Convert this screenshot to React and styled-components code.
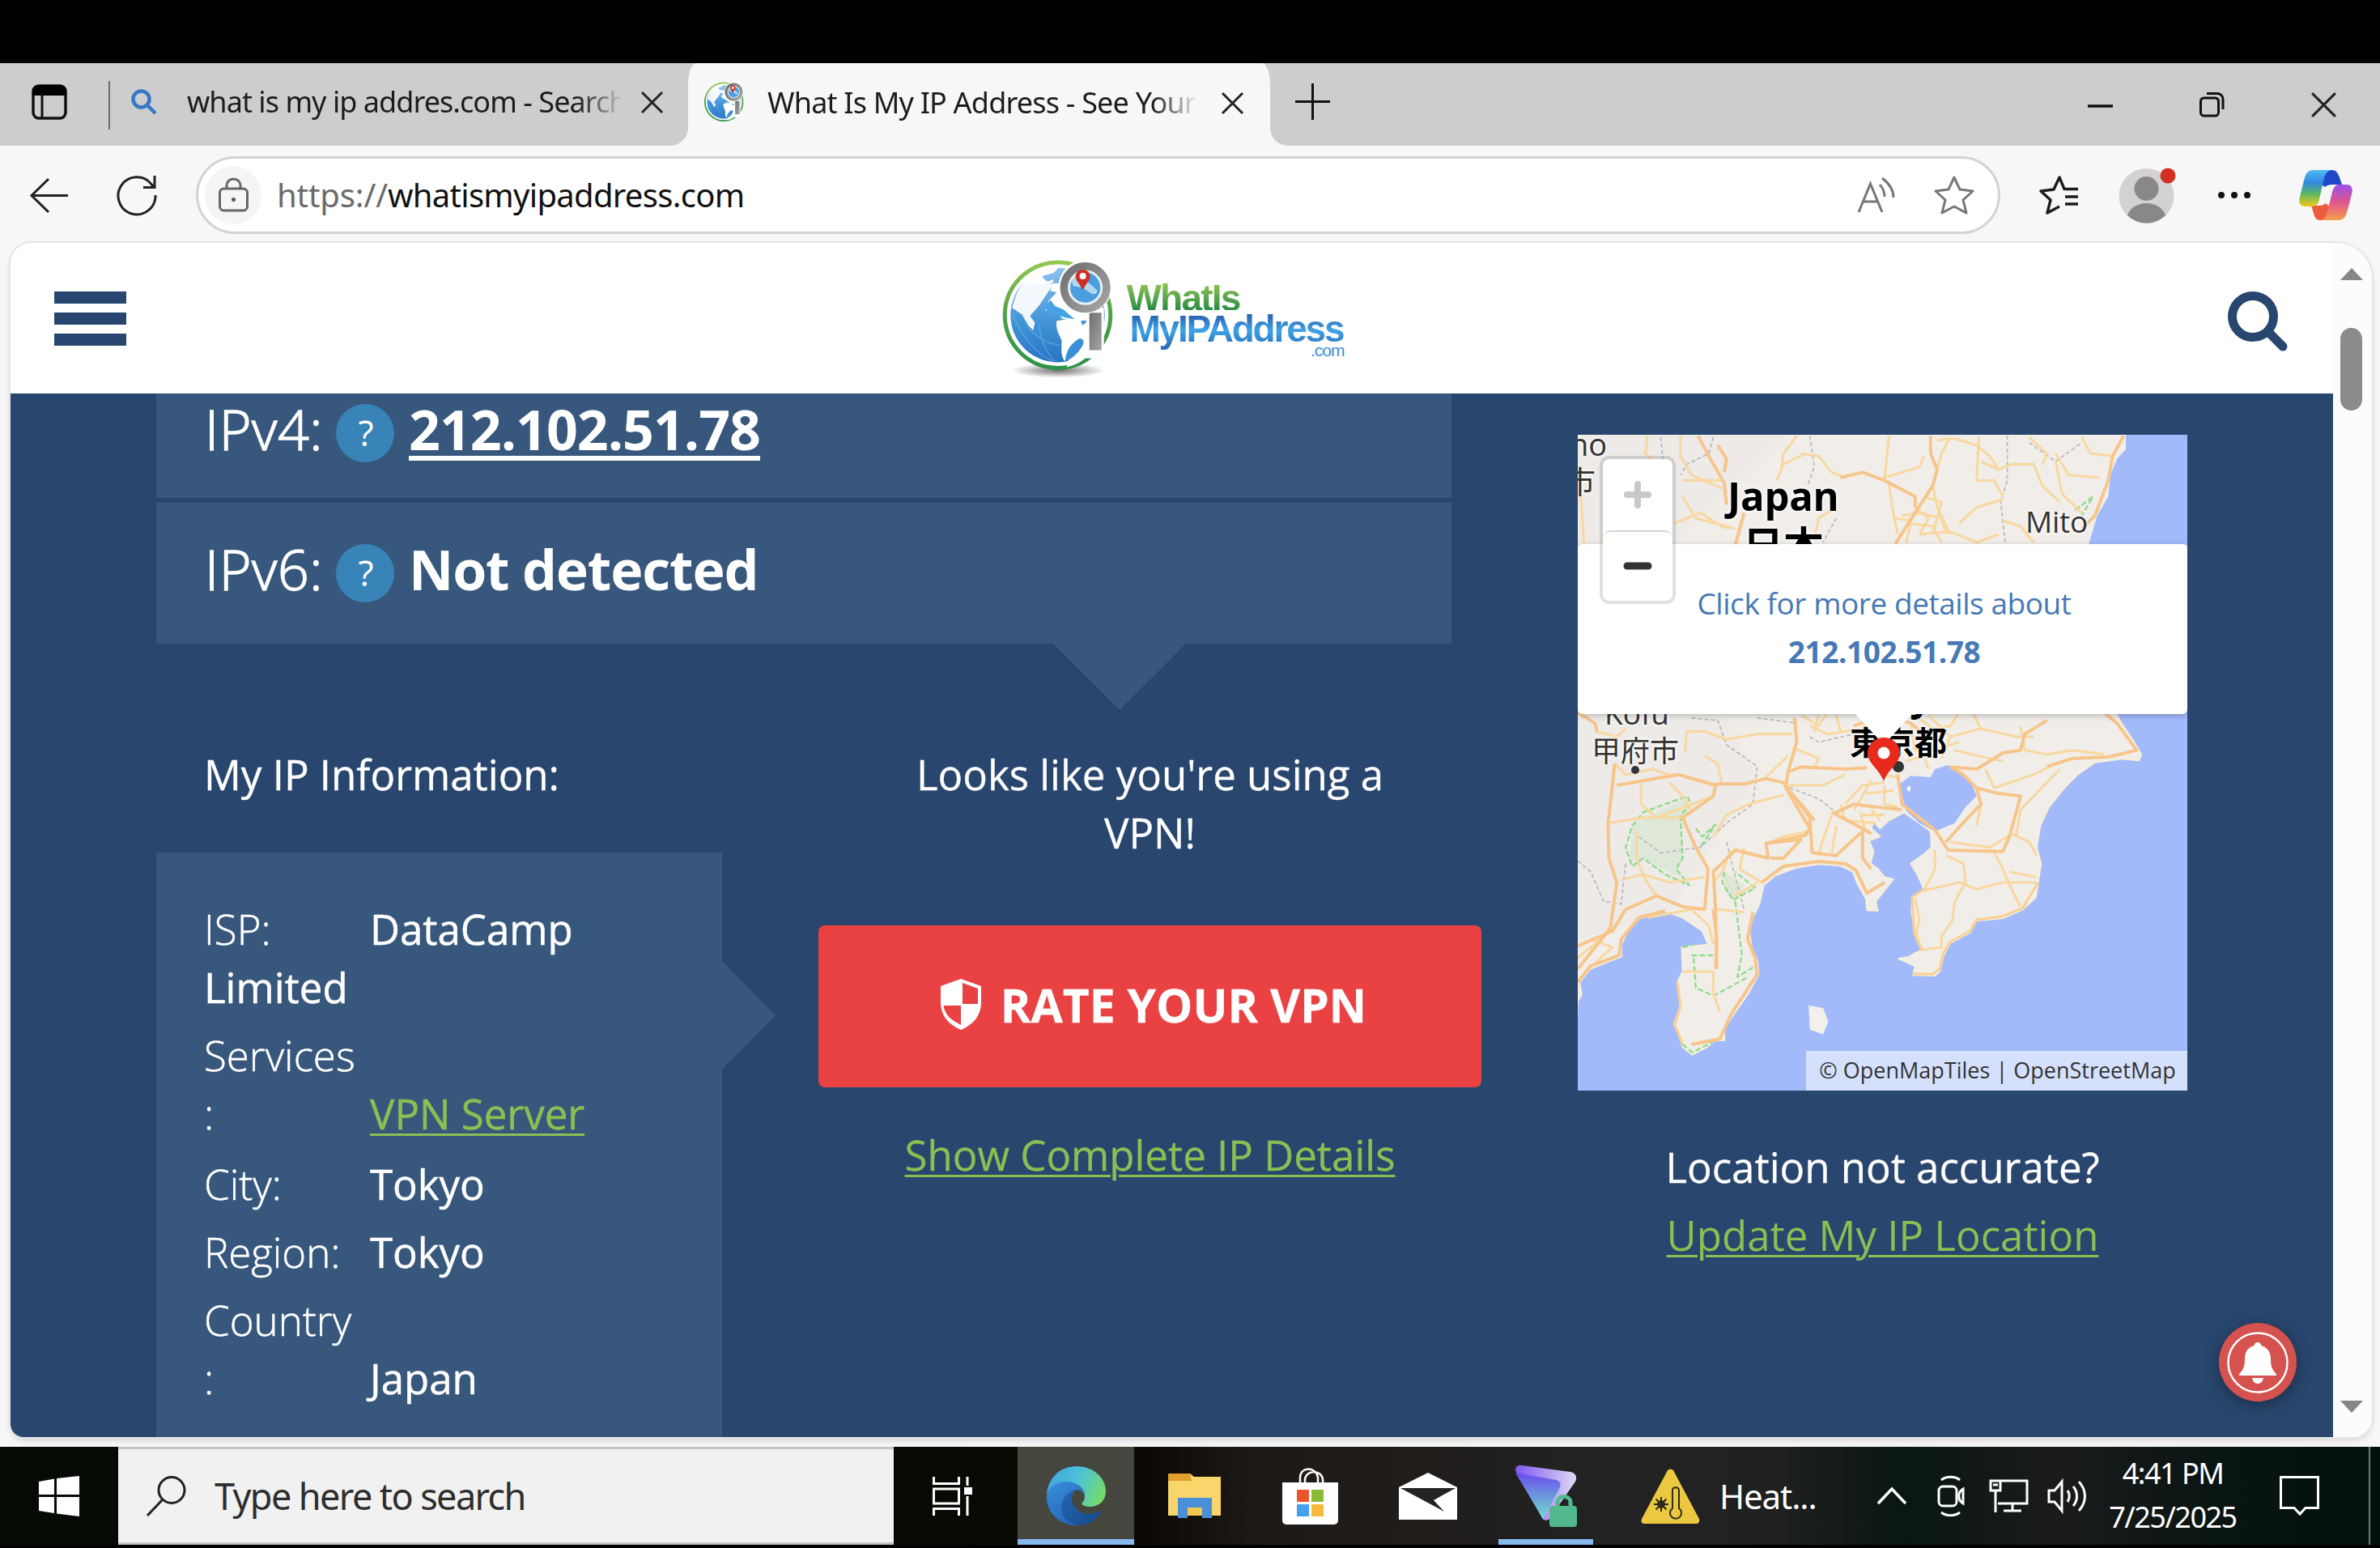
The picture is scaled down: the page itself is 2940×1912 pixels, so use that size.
import React from "react";
import styled, { createGlobalStyle } from "styled-components";

const UI = `"Noto Sans", "Open Sans", sans-serif`;
const WEB = `"Open Sans", "Noto Sans", "Noto Sans CJK JP", sans-serif`;
const NAVY = "#29466e";
const PANEL = "#37577c";
const GREEN = "#87c053";

const GlobalStyle = createGlobalStyle`
  * { box-sizing: border-box; }
  html, body { margin: 0; background: #000; }
  svg { display: block; flex: none; overflow: visible; }
`;

const Screen = styled.div`
  width: 2940px;
  height: 1912px;
  overflow: hidden;
  background: #000;
  display: flex;
  flex-direction: column;
  padding: 78px 0 4px;
  font-family: ${UI};
`;

/* ---------- tab strip ---------- */
const TabStrip = styled.div`
  height: 102px;
  flex: none;
  display: flex;
  background: #f7f7f7;
`;
const StripLeft = styled.div`
  width: 850px;
  background: #cdcdcd;
  border-bottom-right-radius: 22px;
  display: flex;
  align-items: center;
  padding: 0 31px 6px 39px;
`;
const StripRight = styled.div`
  flex: 1;
  background: #cdcdcd;
  border-bottom-left-radius: 22px;
  display: flex;
  align-items: center;
  justify-content: space-between;
  padding: 0 54px 8px 31px;
`;
const ActiveSlot = styled.div`
  width: 719px;
  background: linear-gradient(#cdcdcd 40px, #f7f7f7 40px);
`;
const ActiveTab = styled.div`
  height: 100%;
  background: #f7f7f7;
  border-radius: 10px 10px 0 0 / 26px 26px 0 0;
  display: flex;
  align-items: center;
  padding: 0 33px 4px 20px;
`;
const StripDivider = styled.div`
  width: 2px;
  height: 60px;
  background: #6d6d6d;
  margin: 8px 26px 0 51px;
`;
const TabTitle = styled.div`
  width: ${(p) => p.$w}px;
  margin: 0 ${(p) => p.$after}px 0 ${(p) => p.$before}px;
  overflow: hidden;
  white-space: nowrap;
  font-size: 36px;
  line-height: 50px;
  letter-spacing: ${(p) => p.$ls}px;
  color: #1c1c1c;
  mask-image: linear-gradient(90deg, #000 90%, transparent 101%);
`;
const WindowButtons = styled.div`
  display: flex;
  align-items: center;
  gap: 107px;
  padding-top: 8px;
`;

/* ---------- toolbar ---------- */
const Toolbar = styled.div`
  height: 120px;
  flex: none;
  background: #f7f7f7;
  display: flex;
  align-items: center;
  padding: 2px 34px 0 37px;
`;
const NavIcons = styled.div`
  display: flex;
  align-items: center;
  gap: 60px;
  width: 205px;
`;
const AddressBar = styled.div`
  width: 2229px;
  height: 96px;
  border: 3px solid #d3d3d3;
  border-radius: 48px;
  background: #fff;
  display: flex;
  align-items: center;
  padding: 0 29px 0 8px;
`;
const LockBadge = styled.div`
  width: 70px;
  height: 72px;
  border-radius: 50%;
  background: #f5f5f5;
  display: flex;
  align-items: center;
  justify-content: center;
`;
const Url = styled.div`
  flex: 1;
  margin-left: 19px;
  font-size: 40px;
  line-height: 56px;
  letter-spacing: -0.7px;
  color: #111;
`;
const Scheme = styled.span`
  color: #6b6b6b;
  letter-spacing: -0.1px;
`;
const AddressIcons = styled.div`
  display: flex;
  align-items: center;
  gap: 47px;
`;
const ToolIcons = styled.div`
  display: grid;
  grid-template-columns: 98px 122px 101px 66px;
  align-items: center;
  padding-left: 48px;
`;

/* ---------- viewport ---------- */
const Viewport = styled.div`
  flex: none;
  height: 1487px;
  background: #f7f7f7;
  padding: 0 10px 12px 13px;
`;
const Frame = styled.div`
  height: 1475px;
  border-radius: 26px 44px 24px 16px;
  overflow: hidden;
  display: flex;
  background: #fcfcfc;
  box-shadow: 0 0 0 2px #e6e6e6, 0 4px 8px rgba(0, 0, 0, 0.14);
`;
const Site = styled.div`
  width: 2869px;
  height: 1475px;
  display: flex;
  flex-direction: column;
  font-family: ${WEB};
`;
const ScrollBar = styled.div`
  width: 48px;
  background: #fcfcfc;
  display: flex;
  flex-direction: column;
  align-items: center;
  padding: 31px 3px 30px 0;
`;
const Thumb = styled.div`
  width: 27px;
  height: 102px;
  border-radius: 14px;
  background: #8b8b8b;
  margin: 59px 0 auto;
`;
const SiteHeader = styled.header`
  height: 186px;
  flex: none;
  background: #fff;
  display: grid;
  grid-template-columns: 1fr 440px 1fr;
  padding: 0 56px 0 54px;
`;
const Burger = styled.div`
  width: 89px;
  padding-top: 60px;
  display: flex;
  flex-direction: column;
  gap: 11px;
`;
const BurgerBar = styled.div`
  height: 15px;
  background: #28466f;
`;
const HeaderSearch = styled.div`
  display: flex;
  justify-content: flex-end;
  padding-top: 60px;
`;
const Logo = styled.div`
  display: flex;
  padding-top: 20px;
  margin-left: 12px;
`;
const LogoText = styled.div`
  display: flex;
  flex-direction: column;
  width: 270px;
  margin-left: 16px;
  padding-top: 26px;
  font-family: "Liberation Sans", sans-serif;
  font-weight: 700;
`;
const LogoGreen = styled.div`
  font-size: 46px;
  line-height: 44px;
  height: 37px;
  letter-spacing: -1.8px;
  color: transparent;
  background: linear-gradient(#8cc152 15%, #2f8f46 95%);
  background-clip: text;
`;
const LogoBlue = styled.div`
  font-size: 46px;
  line-height: 46px;
  height: 50px;
  margin: 0 0 -9px 4px;
  letter-spacing: -2.2px;
  color: transparent;
  background: linear-gradient(#2c66b4 15%, #3fa4e6 50%, #2c6fbd 90%);
  background-clip: text;
`;
const LogoDotCom = styled.div`
  font-size: 21px;
  line-height: 18px;
  font-weight: 400;
  text-align: right;
  padding-right: 1px;
  letter-spacing: -1px;
  color: #3b8fd4;
`;

/* ---------- hero ---------- */
const Hero = styled.main`
  height: 1289px;
  flex: none;
  position: relative;
  background: ${NAVY};
  display: flex;
  gap: 119px;
  padding-left: 180px;
  color: #fff;
`;
const LeftColumn = styled.div`
  width: 1637px;
`;
const IpRows = styled.div`
  position: relative;
  width: 1600px;
  display: flex;
  flex-direction: column;
  gap: 6px;
  &::after {
    content: "";
    position: absolute;
    left: 1108px;
    top: 100%;
    border: solid transparent;
    border-width: 82px 82px 0;
    border-top-color: ${PANEL};
  }
`;
const IpRow = styled.div`
  height: ${(p) => p.$h}px;
  padding: ${(p) => p.$top}px 0 0 60px;
  background: ${PANEL};
  display: flex;
  align-items: flex-start;
`;
const IpLabel = styled.div`
  width: 162px;
  font-size: 68px;
  line-height: 72px;
  font-weight: 300;
  letter-spacing: 0.6px;
  -webkit-text-stroke: 1.4px #fff;
`;
const Help = styled.div`
  width: 72px;
  height: 72px;
  margin-top: 5px;
  border-radius: 50%;
  background: #3884b9;
  font-size: 44px;
  line-height: 70px;
  text-align: center;
  padding-left: 2px;
`;
const IpValue = styled.div`
  margin-left: 18px;
  font-size: 68px;
  line-height: 72px;
  font-weight: 700;
  letter-spacing: ${(p) => p.$ls}px;
  text-decoration: ${(p) => (p.$link ? "underline" : "none")};
  text-decoration-thickness: 6px;
  text-underline-offset: 7px;
`;
const Columns = styled.div`
  display: grid;
  grid-template-columns: 699px 819px;
  column-gap: 119px;
  padding-top: 125px;
`;
const Heading = styled.div`
  padding-left: 59px;
  font-size: 51px;
  line-height: 72px;
  margin-bottom: 61px;
  -webkit-text-stroke: 0.4px currentColor;
`;
const InfoPanel = styled.div`
  position: relative;
  height: 722px;
  background: ${PANEL};
  padding: 58px 60px 0 59px;
  font-size: 51px;
  line-height: 72px;
  &::after {
    content: "";
    position: absolute;
    left: 100%;
    top: 134px;
    border: solid transparent;
    border-width: 67px 0 67px 66px;
    border-left-color: ${PANEL};
  }
`;
const InfoRow = styled.div`
  margin-bottom: ${(p) => p.$gap || 12}px;
  -webkit-text-stroke: 0.5px currentColor;
`;
const InfoLabel = styled.span`
  display: inline-block;
  vertical-align: bottom;
  width: 205px;
  font-weight: 300;
`;
const Link = styled.a`
  color: ${GREEN};
  text-decoration: underline;
  text-decoration-thickness: 3px;
  text-underline-offset: 5px;
`;
const CenterColumn = styled.div`
  display: flex;
  flex-direction: column;
  align-items: center;
  font-size: 51px;
  line-height: 72px;
  text-align: center;
  -webkit-text-stroke: 0.3px currentColor;
`;
const VpnNote = styled.div`
  width: 640px;
`;
const RateButton = styled.div`
  width: 819px;
  height: 200px;
  margin: 79px 0 47px;
  border-radius: 8px;
  background: #ea4243;
  display: flex;
  align-items: center;
  justify-content: center;
  gap: 22px;
  padding: 0 0 5px 7px;
  font-size: 57px;
  font-weight: 700;
`;
const RightColumn = styled.div`
  width: 753px;
  padding-top: 51px;
  display: flex;
  flex-direction: column;
  font-size: 51px;
  line-height: 72px;
  text-align: center;
`;
const MapBox = styled.div`
  position: relative;
  height: 810px;
  overflow: hidden;
  margin-bottom: 58px;
  background: #f1eeea;
`;
const MapLabel = styled.div`
  position: absolute;
  left: ${(p) => p.$x}px;
  top: ${(p) => p.$y}px;
  font-size: ${(p) => p.$s}px;
  line-height: 1;
  font-weight: ${(p) => (p.$bold ? 700 : 400)};
  letter-spacing: ${(p) => p.$ls || 0}px;
  white-space: nowrap;
  color: ${(p) => (p.$bold ? "#000" : "#333")};
  text-shadow: 0 0 4px #fff, 0 0 4px #fff;
`;
const Popup = styled.div`
  position: absolute;
  left: 0;
  top: 135px;
  width: 753px;
  height: 210px;
  padding: 43px 0 0 4px;
  border-radius: 6px;
  background: #fff;
  box-shadow: 0 2px 7px rgba(0, 0, 0, 0.25);
  color: #4679b5;
  font-size: 37px;
  line-height: 60px;
  letter-spacing: -0.45px;
  &::after {
    content: "";
    position: absolute;
    left: 343px;
    top: 100%;
    border: solid transparent;
    border-width: 38px 35px 0;
    border-top-color: #fff;
  }
`;
const ZoomControl = styled.div`
  position: absolute;
  left: 27px;
  top: 26px;
  width: 94px;
  height: 183px;
  border: 4px solid rgba(0, 0, 0, 0.12);
  background-clip: padding-box;
  border-radius: 12px;
  background-color: #fff;
  display: grid;
  grid-template-rows: 1fr 1fr;
  place-items: center;
`;
const ZoomCell = styled.div`
  width: 100%;
  height: 100%;
  display: grid;
  place-items: center;
  border-top: ${(p) => (p.$line ? "2px solid #d4d4d4" : "0")};
  border-radius: 10px;
`;
const Pin = styled.div`
  position: absolute;
  left: 358px;
  top: 374px;
`;
const Attribution = styled.div`
  position: absolute;
  right: 0;
  bottom: 0;
  width: 471px;
  height: 49px;
  background: rgba(255, 255, 255, 0.55);
  color: #333;
  font-size: 27px;
  line-height: 48px;
  padding-left: 2px;
  white-space: nowrap;
`;
const MapNote = styled.div`
  margin-bottom: 12px;
  -webkit-text-stroke: 0.3px currentColor;
`;
const Bell = styled.div`
  position: absolute;
  right: 45px;
  bottom: 44px;
  width: 96px;
  height: 97px;
  border-radius: 50%;
  background: #d5524f;
  box-shadow: 0 4px 18px rgba(0, 0, 0, 0.35);
  display: grid;
  place-items: center;
`;

/* ---------- taskbar ---------- */
const Taskbar = styled.div`
  height: 121px;
  flex: none;
  display: flex;
  background: linear-gradient(90deg, #060a04 0, #070904 1120px, #0d0a06 1420px, #1f1a16 1560px, #201d1b 1750px, #232323 2000px, #1f2020 2200px, #081614 2350px, #1a1b1b 2540px, #081513 2750px, #03100e 100%);
  color: #fff;
`;
const StartButton = styled.div`
  width: 146px;
  display: grid;
  place-items: center;
`;
const SearchBox = styled.div`
  width: 958px;
  background: #f1f1f1;
  border: solid #c4c4c4;
  border-width: 3px 0;
  display: flex;
  align-items: center;
  gap: 35px;
  padding-left: 35px;
  font-size: 45px;
  letter-spacing: -1.6px;
  color: #2d2d2d;
`;
const TaskItem = styled.div`
  width: ${(p) => p.$w}px;
  height: 121px;
  margin-left: ${(p) => p.$ml || 0}px;
  padding-right: ${(p) => p.$pr || 0}px;
  display: grid;
  place-items: center;
  background: ${(p) => (p.$active ? "#45473f" : "transparent")};
  box-shadow: ${(p) => (p.$open ? "inset 0 -7px 0 #86b9ee" : "none")};
`;
const Weather = styled.div`
  display: flex;
  align-items: center;
  gap: 24px;
  margin-left: 59px;
  width: 292px;
  font-size: 42px;
  letter-spacing: -1.1px;
`;
const Tray = styled.div`
  display: grid;
  grid-template-columns: 74px 64px 72px 52px;
  align-items: center;
  width: 262px;
`;
const Clock = styled.div`
  width: 210px;
  margin: 0 3px 0 -2px;
  display: flex;
  flex-direction: column;
  justify-content: center;
  text-align: center;
  font-size: 36px;
  line-height: 54px;
  letter-spacing: -1.5px;
  padding-bottom: 1px;
`;
const Notice = styled.div`
  width: 136px;
  display: flex;
  align-items: center;
  padding-left: 24px;
  border-right: 2px solid #6c7674;
`;

/* ---------- icons ---------- */
const CloseX = ({ s = 27, w = 3 }) => (
  <svg width={s} height={s} viewBox="0 0 27 27" fill="none" stroke="#222" strokeWidth={w}>
    <path d="M1 1l25 25M26 1L1 26" />
  </svg>
);

const GlobeArt = ({ size, shadow }) => (
  <svg width={size} height={size * 1.07} viewBox="0 0 136 146">
    <defs>
      <linearGradient id="ring" x1="0" y1="0" x2="0" y2="1">
        <stop offset="0" stopColor="#94c84f" />
        <stop offset=".5" stopColor="#4fa14a" />
        <stop offset="1" stopColor="#2f9247" />
      </linearGradient>
      <linearGradient id="ocean" x1="0" y1="0" x2="0" y2="1">
        <stop offset="0" stopColor="#8cc0ec" />
        <stop offset=".6" stopColor="#3f92d6" />
        <stop offset="1" stopColor="#2a74c4" />
      </linearGradient>
      <linearGradient id="metal" x1="0" y1="0" x2="1" y2="1">
        <stop offset="0" stopColor="#6f6f6f" />
        <stop offset="1" stopColor="#a5a5a5" />
      </linearGradient>
      <radialGradient id="shade">
        <stop offset="0" stopColor="#000" stopOpacity=".55" />
        <stop offset="1" stopColor="#000" stopOpacity="0" />
      </radialGradient>
    </defs>
    {shadow && <ellipse cx="68" cy="137" rx="58" ry="9" fill="url(#shade)" />}
    <circle cx="67" cy="69" r="65" fill="#fff" stroke="url(#ring)" strokeWidth="5" />
    <circle cx="67" cy="69" r="58" fill="url(#ocean)" />
    <path d="M24 30C34 17 50 10 68 11l-6 6-14 4 4 8 10-4-4 14 8 2-10 10-4 12 6 4 8-4 6 10 14 4 20-2c-8 6-12 10-16 14-3 12-6 18-8 28l-4 16c20-4 42-22 46-48L118 30z" fill="#fff" />
    <path d="M66 76l26-4c8 8 6 14 2 22-8 8-14 16-18 32-6-8-4-18-4-26-4-8-8-16-6-24z" fill="#fff" />
    <path d="M24 30c-6 8-10 18-13 30l12 8 8 14 6 6 2-10-6-8 12-14 8-12 8-12-14-10z" fill="#fff" opacity=".92" />
    <path d="M52 58l6-8 6 8 10 4 14 12-12-2-12-4-10-2z" fill="#45a3e4" />
    <path d="M76 126c2-12 4-18 14-26 8-6 12 2 6 9-5 8-12 14-20 17z" fill="#3a8fd6" />
    <path d="M12 70c14 30 30 48 50 56M30 84c14 14 24 20 40 22M44 80c2 20 10 36 20 46" stroke="#7ebced" strokeWidth="1" fill="none" opacity=".7" />
    <rect x="102" y="60" width="22" height="62" fill="#fff" />
    <path d="M106 66h15v46h-15z" fill="url(#metal)" />
    <circle cx="101" cy="34" r="33" fill="#fff" />
    <circle cx="101" cy="35" r="26" fill="#4a9fe0" stroke="url(#metal)" strokeWidth="10" />
    <circle cx="101" cy="35" r="20" fill="none" stroke="#e8eef2" strokeWidth="3" />
    <path d="M84 26c5-8 12-11 20-9l-2 10 8 6 6 6c-2 6-6 4-10 2l-8-6-12-2z" fill="#d6ebfa" opacity=".75" />
    <path d="M98 38c-6-10-9-12-9-17a9 8 0 0118 0c0 5-4 8-9 17z" fill="#d0301f" />
    <circle cx="98" cy="21" r="4" fill="#fff" />
  </svg>
);

const EdgeLogo = () => (
  <svg width="73" height="73" viewBox="0 0 73 73">
    <defs>
      <linearGradient id="edgeTop" x1="0" y1=".3" x2="1" y2=".6">
        <stop offset="0" stopColor="#3fa5de" />
        <stop offset=".5" stopColor="#4cc3d8" />
        <stop offset="1" stopColor="#74dc68" />
      </linearGradient>
      <linearGradient id="edgeSide" x1="0" y1="0" x2=".6" y2="1">
        <stop offset="0" stopColor="#3a8fdc" />
        <stop offset="1" stopColor="#2465bb" />
      </linearGradient>
      <linearGradient id="edgeIn" x1="0" y1="0" x2="1" y2="1">
        <stop offset="0" stopColor="#2467b4" />
        <stop offset="1" stopColor="#174a8c" />
      </linearGradient>
    </defs>
    <path d="M0 36C1 15 16 0 37 0c20 0 36 14 36 31 0 11-8 19-20 19-7 0-11-3-9-5 2-2 3-5 3-8 0-9-9-17-21-17C12 20 2 27 0 36z" fill="url(#edgeTop)" />
    <path d="M0 37c2-12 12-18 24-18 14 0 23 8 23 18-2-6-7-8-11-8-9 4-14 14-12 25 2 9 9 17 17 19C18 75-1 58 0 37z" fill="url(#edgeSide)" />
    <path d="M37 29c-11 2-19 11-19 22 0 12 10 22 23 22 12-1 21-8 26-16 1-2-1-2-2-1-4 2-9 3-13 3-11 0-21-8-21-19 0-5 2-9 6-11z" fill="url(#edgeIn)" />
  </svg>
);

const CopilotLogo = () => (
  <svg width="66" height="62" viewBox="0 0 66 62">
    <defs>
      <linearGradient id="cpA" x1="0" y1="0" x2="0" y2="1">
        <stop offset="0" stopColor="#4cbcf2" />
        <stop offset=".35" stopColor="#3488e2" />
        <stop offset=".65" stopColor="#5cb860" />
        <stop offset="1" stopColor="#f2c81e" />
      </linearGradient>
      <linearGradient id="cpB" x1="0" y1="0" x2="0" y2="1">
        <stop offset="0" stopColor="#9a50e8" />
        <stop offset=".5" stopColor="#e0568c" />
        <stop offset="1" stopColor="#f6a04a" />
      </linearGradient>
    </defs>
    <path d="M32 0h9c5 0 7 4 9 9l3 9H42c-5 0-8 1-10 3l-4-3z" fill="#1f48c8" />
    <path d="M36 62H26c-5 0-7-4-8-9l-3-9h10c4 0 6-1 7-3l5 3z" fill="#ee5a3c" />
    <path d="M18 0h22c-5 1-7 4-9 10l-6 26c-1 6-4 9-9 9H7C1 45-1 40 1 33l6-24C9 3 12 0 18 0z" fill="url(#cpA)" />
    <path d="M48 62H26c5-1 7-4 9-10l6-25c2-6 4-9 9-9h9c6 0 8 5 6 12l-6 23c-2 6-5 9-11 9z" fill="url(#cpB)" />
  </svg>
);

const STAR = "M25 2l7 15 16 2-12 11 4 16-15-8-15 8 4-16L2 19l16-2z";

/* Road and coast geometry shares one survey grid for both halves of the map. */
const GRID = "translate(-49.3 323) scale(.542 .3333)";
const SEA =
  "M1310 40L1330 100 1355 160 1375 215 1370 238 1330 232 1270 245 1230 290 1200 340 1165 410 1145 480 1137 560 1147 620 1140 690 1135 745 1105 790 1060 822 1000 832 985 875 940 915 925 960 915 1020 905 1035 855 1033 860 1000 840 985 822 972 845 966 862 950 875 940 862 890 852 800 853 745 880 715 865 660 850 620 880 585 897 560 895 500 835 430 800 460 780 490 765 465 760 490 780 520 755 535 765 575 758 620 775 640 790 670 810 678 790 720 770 760 775 795 750 793 748 750 730 700 718 650 690 628 640 622 590 635 540 665 515 700 505 770 490 820 482 870 487 930 500 980 503 1030 480 1100 450 1170 425 1230 425 1275 405 1275 385 1300 352 1328 330 1300 322 1250 310 1215 325 1150 318 1060 330 1020 328 930 388 920 375 870 330 820 285 795 230 825 205 870 190 920 190 965 120 1010 95 1060 100 1105 91 1130 80 1480 1500 1480 1500 40Z";
const BAY =
  "M820 330L850 295 895 300 905 270 935 255 965 290 990 330 1000 370 975 410 950 470 905 500 870 470 840 425 832 380Z";
const NORTH_SEA =
  "M1340 -980L1340 -915 1320 -880 1305 -820 1300 -740 1275 -670 1255 -560 1500 -560 1500 -980Z";
const MAJOR = [
  "M91 60L130 100 135 130M175 250L170 330 160 470 162 600 180 690 165 860 91 1010",
  "M91 925L170 870 200 790 270 740 330 780 380 790 388 640 360 560 330 450 400 370 405 330 320 290 250 310 180 330",
  "M405 325L470 325 520 305 560 320 620 450 625 580M570 345L600 400 630 460",
  "M570 280L600 262 700 270 750 265M585 80L590 170 570 280 565 340 620 490 610 515 520 545 525 600 450 570 400 650 405 790 408 1010",
  "M400 790L408 900 405 1010M520 545L600 530 560 600 530 600",
  "M670 430L740 490 760 510M680 430L720 400 770 410 830 420M820 290L830 400 905 495 935 570 1060 575 1075 520 1100 370 1050 360 1000 340 970 290 940 262",
  "M1000 340L1010 400 980 450 930 540M940 262L1000 270 1060 210 1100 200 1110 140 1160 90",
  "M720 110L790 70 850 100 880 140M625 580L680 590 740 500 740 600 760 640",
  "M510 690L560 630 640 612 700 620 725 645 750 730 790 690",
  "M490 800L478 900 495 970 500 1030 440 1180 415 1270 350 1290",
  "M91 1060L120 1000 185 960 190 900 230 820 290 795",
  "M365 -965L400 -860 425 -790 430 -710M410 -930L430 -880 425 -830",
  "M470 -680L450 -560M895 -965L895 -900 910 -840 900 -780 860 -680 815 -565",
  "M690 -810L740 -830 790 -800 860 -740 860 -700M1335 -965L1310 -890 1300 -800 1270 -670 1240 -620",
  "M1160 260L1220 230 1300 225 1365 200 1320 100 1290 60",
];
const MINOR = [
  "M250 -965L245 -900 270 -860M325 -965L325 -890 350 -820 420 -770M555 -850L560 -900 590 -965M600 -900L640 -890 670 -830 700 -810",
  "M545 -800L560 -860 610 -900M800 -965L795 -880 790 -810 870 -850 880 -890M910 -950L950 -955 1000 -930 1030 -890 1050 -840 1080 -860 1130 -860 1150 -780 1190 -720",
  "M920 -900L900 -780 910 -700 940 -600M1005 -960L1000 -800 1040 -800 1060 -740M1180 -900L1210 -820 1280 -810M1180 -870L1195 -750 1240 -680",
  "M800 -790L810 -680 820 -600M830 -670L870 -680 920 -660 930 -600M850 -640L900 -630 920 -570M880 -740L920 -720 900 -600M870 -600L940 -610 1000 -570 1050 -600",
  "M630 -580L640 -660 670 -690M310 -640L370 -680 430 -620M330 -740L360 -660 450 -620M91 -800L100 -700 105 -570M1060 -650L1100 -630 1130 -570M960 -640L1000 -700 1060 -730",
  "M815 -660L850 -650 840 -570M860 -700L890 -660 870 -600M1120 -960L1160 -900 1150 -860M1240 -960L1260 -900 1310 -890M330 -800L420 -800M940 -960L920 -900M1010 -870L1050 -840",
  "M130 130L180 150 200 120M175 250L200 290 260 270 300 290M335 210L340 130 380 130 430 160 500 140 580 140M380 220L410 250 420 330",
  "M235 320L235 400 270 450 400 370M300 320L330 370 350 420M160 470L240 450 330 450M225 500L225 600 245 680 270 740M190 680L240 660 300 690 380 670",
  "M400 520L430 440 480 400 560 365M620 110L660 140 740 120 770 60M640 70L630 130M680 70L690 130M860 70L900 120 940 110 960 60",
  "M940 150L1010 120 1090 150 1130 150M950 200L1000 220 1060 240M890 70L940 150 920 230M1100 110L1110 200 1160 215 1220 200 1290 215",
  "M700 400L740 330 790 320M720 420L740 370 760 310M735 430L745 490M790 330L790 400 820 410M640 590L650 530 670 440M670 580L680 480",
  "M580 190L640 230 630 270M570 330L650 330 700 290M740 440L790 440M750 360L810 350M570 220L520 300M780 290L820 300",
  "M850 110L860 200 900 220M870 150L900 200 960 170M840 240L880 220 890 270M690 400L700 460 770 470M760 420L780 460M990 60L1010 120M600 70L640 110 660 60",
  "M940 540L1030 560 1080 510 1120 540 1137 590M1000 480L1010 400M930 590L970 620 975 690M1040 580L1060 640 1075 700 1100 780M1075 650L1135 670",
  "M880 720L960 690 1000 715 1060 690 1137 690M975 690L950 760 945 830 920 890 920 935M860 750L870 830 862 880 875 940 920 930M905 570L905 640 880 720",
  "M1090 520L1100 420 1190 270M1040 340L1130 290 1180 250M1020 270L1040 340M440 570L420 650 400 690M410 790L470 800M330 1020L400 1020M400 1020L400 1100 415 1170",
  "M250 820L350 790 390 850 400 920M120 900L170 930 130 990M91 970L150 890M525 545L560 520 615 500M450 740L500 690M470 560L460 640 510 690",
];

const JapanMap = () => (
  <svg width="753" height="810" viewBox="0 0 753 810">
    <g transform={GRID} fill="none" strokeLinejoin="round">
      <path d="M91 -965H560L400 -700 300 -560H91zM91 80H430L500 300 300 800 91 900z" fill="#ebe8e5" opacity=".7" />
      <path d="M245 450L335 380 345 440 325 470 330 600 315 665 240 600 210 610 215 480z" fill="#dfe8d8" />
      <path d="M425 650L470 700 450 760 425 720z" fill="#dde7d3" />
      <g fill="#a3bafa">
        <path d={SEA} stroke="#f7efd8" strokeWidth="2" vectorEffect="non-scaling-stroke" />
        <path d={BAY} />
        <path d={NORTH_SEA} />
      </g>
      <path d="M617 1145L650 1155 662 1205 650 1253 620 1235z" fill="#f1f0ea" />
      <path d="M845 330l5 10-3 14-6-8z" fill="#fff" />
      <g stroke="#b5b5b8" strokeWidth="1.6" strokeDasharray="5 3">
        <path vectorEffect="non-scaling-stroke" d="M350 80L410 90 430 180 500 260 490 400 430 470 370 560 280 580 230 520M430 540L445 640 470 790M91 610L120 650 150 760 190 770 200 620M560 330L640 380 680 430M620 150L640 170 720 140" />
        <path vectorEffect="non-scaling-stroke" d="M620 -965L630 -850 615 -780M400 -960L390 -900 340 -860 325 -820M280 -960L285 -880M1070 -965L1070 -800 1055 -720 1065 -570M1120 -940L1180 -870 1240 -940M680 -660L650 -570M500 80L590 100" />
      </g>
      <g stroke="#8fdc8a" strokeWidth="2.4" strokeDasharray="7 3">
        <path vectorEffect="non-scaling-stroke" d="M215 480L240 430 340 370 350 400 325 440 330 600 315 640 345 700 290 660 240 600 215 630 200 560zM360 490L375 520 405 475 370 560M425 650L420 690 445 755 495 710 450 650M450 760L465 960 455 1040 495 1000M330 930L355 920M350 960H400M355 970L360 1080 400 1110 480 1040M330 1290L352 1320 400 1280M1225 -690L1265 -740 1240 -670" />
      </g>
      <g stroke="#f8d8a0" strokeWidth="3.1">
        {MINOR.map((d) => (
          <path key={d} d={d} vectorEffect="non-scaling-stroke" />
        ))}
      </g>
      <g stroke="#f7c58a" strokeWidth="4">
        {MAJOR.map((d) => (
          <path key={d} d={d} vectorEffect="non-scaling-stroke" />
        ))}
      </g>
      <g stroke="#f9d08f" strokeWidth="3">
        <path vectorEffect="non-scaling-stroke" d="M1140 690L1105 785 1060 815 1000 828 985 870 940 910 925 950 915 1010 900 1030 855 1028M875 940L858 880 853 745 880 715M318 1060L325 1150 312 1215 330 1290" />
      </g>
    </g>
    <circle cx="71" cy="414" r="5" fill="#333" />
    <circle cx="396" cy="410" r="7" fill="#333" />
  </svg>
);

export default function App() {
  return (
    <>
      <GlobalStyle />
      <Screen>
        <TabStrip>
          <StripLeft>
            <svg width="44" height="44" viewBox="0 0 44 44">
              <rect x="2" y="2" width="40" height="40" rx="7" fill="none" stroke="#111" strokeWidth="3.5" />
              <path d="M1 14V8a7 7 0 017-7h28a7 7 0 017 7v6z" fill="#000" />
              <path d="M13 12v30" stroke="#111" strokeWidth="3" />
            </svg>
            <StripDivider />
            <svg width="32" height="32" viewBox="0 0 32 32" fill="none" stroke="#3478c6" strokeWidth="4.5">
              <circle cx="12.500" cy="12.500" r="10" />
              <path d="M19 19l11 11" />
            </svg>
            <TabTitle $w={536} $before={37} $after={26} $ls={-0.95}>what is my ip addres.com - Search</TabTitle>
            <CloseX />
          </StripLeft>
          <ActiveSlot>
            <ActiveTab>
              <GlobeArt size={49} />
              <TabTitle $w={528} $before={29} $after={33} $ls={-0.8}>What Is My IP Address - See Your</TabTitle>
              <CloseX />
            </ActiveTab>
          </ActiveSlot>
          <StripRight>
            <svg width="43" height="45" viewBox="0 0 43 45" stroke="#111" strokeWidth="3">
              <path d="M0 22.500h43M21.500 0v45" />
            </svg>
            <WindowButtons>
              <svg width="31" height="31" viewBox="0 0 31 31" stroke="#111" strokeWidth="3.500">
                <path d="M0 17h31" />
              </svg>
              <svg width="31" height="31" viewBox="0 0 31 31" fill="none" stroke="#111" strokeWidth="3">
                <rect x="1.500" y="7" width="22" height="22" rx="4" />
                <path d="M9 1.500h13a7 7 0 017 7V21" />
              </svg>
              <CloseX s={31} w={2.6} />
            </WindowButtons>
          </StripRight>
        </TabStrip>

        <Toolbar>
          <NavIcons>
            <svg width="47" height="43" viewBox="0 0 47 43" fill="none" stroke="#222" strokeWidth="3">
              <path d="M47 21.500H2M23 1L2 21.500 23 42" />
            </svg>
            <svg width="50" height="48" viewBox="0 0 50 48" fill="none" stroke="#222" strokeWidth="3">
              <path d="M48 24A23 23 0 1 1 43 10.500L46 14M47 0v14.500H33" />
            </svg>
          </NavIcons>
          <AddressBar>
            <LockBadge>
              <svg width="37" height="42" viewBox="0 0 37 42" fill="none" stroke="#666" strokeWidth="3">
                <rect x="1.500" y="13" width="34" height="27" rx="5" />
                <path d="M10 13V9a8.500 8 0 0117 0v4" />
                <circle cx="18.500" cy="26.500" r="2.500" fill="#555" stroke="none" />
              </svg>
            </LockBadge>
            <Url>
              <Scheme>https://</Scheme>whatismyipaddress.com
            </Url>
            <AddressIcons>
              <svg width="47" height="44" viewBox="0 0 47 44" fill="none" stroke="#777" strokeWidth="3">
                <path d="M1 43L15.500 8 30 43M6 30h19M27 9c4 4 6 8 6 15M30 1c8 6 14 13 14 24" />
              </svg>
              <svg width="50" height="48" viewBox="0 0 50 48" fill="none" stroke="#777" strokeWidth="3" strokeLinejoin="round">
                <path d={STAR} />
              </svg>
            </AddressIcons>
          </AddressBar>
          <ToolIcons>
            <svg width="50" height="48" viewBox="0 0 50 48" fill="none" stroke="#1c1c1c" strokeWidth="3.400" strokeLinejoin="round">
              <path d="M48 16.500H31L25 2l-7 15-16 2 12 11-4 16 15-8M32 26h16M32 35h16" />
            </svg>
            <svg width="71" height="69" viewBox="0 0 71 69">
              <defs>
                <clipPath id="face">
                  <circle cx="34.500" cy="35" r="33.500" />
                </clipPath>
              </defs>
              <circle cx="34.500" cy="35" r="34" fill="#d4d2d0" />
              <g fill="#8a8886" clipPath="url(#face)">
                <circle cx="34.500" cy="26" r="15" />
                <ellipse cx="34.500" cy="63" rx="24" ry="19" />
              </g>
              <circle cx="61" cy="10" r="9.500" fill="#d13022" />
            </svg>
            <svg width="42" height="10" viewBox="0 0 42 10" fill="#111">
              <circle cx="5" cy="5" r="4" />
              <circle cx="21" cy="5" r="4" />
              <circle cx="37" cy="5" r="4" />
            </svg>
            <CopilotLogo />
          </ToolIcons>
        </Toolbar>

        <Viewport>
          <Frame>
            <Site>
              <SiteHeader>
                <Burger>
                  <BurgerBar />
                  <BurgerBar />
                  <BurgerBar />
                </Burger>
                <Logo>
                  <GlobeArt size={137} shadow />
                  <LogoText>
                    <LogoGreen>WhatIs</LogoGreen>
                    <LogoBlue>MyIPAddress</LogoBlue>
                    <LogoDotCom>.com</LogoDotCom>
                  </LogoText>
                </Logo>
                <HeaderSearch>
                  <svg width="74" height="74" viewBox="0 0 74 74" fill="none" stroke="#28466f" strokeLinecap="round">
                    <circle cx="31" cy="31" r="25.500" strokeWidth="11" />
                    <path d="M51 51l17 17" strokeWidth="11" />
                  </svg>
                </HeaderSearch>
              </SiteHeader>

              <Hero>
                <LeftColumn>
                  <IpRows>
                    <IpRow $h={129} $top={8}>
                      <IpLabel>IPv4:</IpLabel>
                      <Help>?</Help>
                      <IpValue $link $ls={-1}>212.102.51.78</IpValue>
                    </IpRow>
                    <IpRow $h={174} $top={46}>
                      <IpLabel>IPv6:</IpLabel>
                      <Help>?</Help>
                      <IpValue $ls={-1.15}>Not detected</IpValue>
                    </IpRow>
                  </IpRows>
                  <Columns>
                    <div>
                      <Heading>My IP Information:</Heading>
                      <InfoPanel>
                        <InfoRow>
                          <InfoLabel>ISP:</InfoLabel>DataCamp Limited
                        </InfoRow>
                        <InfoRow $gap={15}>
                          <InfoLabel>Services<br />:</InfoLabel>
                          <Link>VPN Server</Link>
                        </InfoRow>
                        <InfoRow>
                          <InfoLabel>City:</InfoLabel>Tokyo
                        </InfoRow>
                        <InfoRow>
                          <InfoLabel>Region:</InfoLabel>Tokyo
                        </InfoRow>
                        <InfoRow>
                          <InfoLabel>Country<br />:</InfoLabel>Japan
                        </InfoRow>
                      </InfoPanel>
                    </div>
                    <CenterColumn>
                      <VpnNote>Looks like you're using a VPN!</VpnNote>
                      <RateButton>
                        <svg width="54" height="65" viewBox="0 0 54 65">
                          <path d="M27 1l25 9v20c0 16-9 27-25 34C11 57 2 46 2 30V10z" fill="#fff" />
                          <path d="M29 6l19 7v19H29zM5.500 34H27v24C13 51 7 44 5.500 34z" fill="#ea4243" />
                        </svg>
                        RATE YOUR VPN
                      </RateButton>
                      <Link>Show Complete IP Details</Link>
                    </CenterColumn>
                  </Columns>
                </LeftColumn>

                <RightColumn>
                  <MapBox>
                    <JapanMap />
                    <MapLabel $x={-10} $y={-8} $s={38}>no</MapLabel>
                    <MapLabel $x={-16} $y={38} $s={38}>市</MapLabel>
                    <MapLabel $x={185} $y={51} $s={49} $bold $ls={-0.2}>Japan</MapLabel>
                    <MapLabel $x={204} $y={112} $s={50} $bold>日本</MapLabel>
                    <MapLabel $x={553} $y={88} $s={37} $ls={-0.3}>Mito</MapLabel>
                    <MapLabel $x={33} $y={325} $s={37}>Kofu</MapLabel>
                    <MapLabel $x={17} $y={373} $s={36}>甲府市</MapLabel>
                    <MapLabel $x={323} $y={298} $s={48} $bold>Tokyo</MapLabel>
                    <MapLabel $x={336} $y={360} $s={40} $bold>東京都</MapLabel>
                    <Popup>
                      Click for more details about
                      <br />
                      <b>212.102.51.78</b>
                    </Popup>
                    <Pin>
                      <svg width="40" height="54" viewBox="0 0 40 54">
                        <path d="M20 54C14 38 0 32 0 18.500a20 18.500 0 0140 0C40 32 26 38 20 54z" fill="#e8291c" />
                        <circle cx="20" cy="19" r="7.500" fill="#fff" />
                      </svg>
                    </Pin>
                    <ZoomControl>
                      <ZoomCell>
                        <svg width="36" height="36" viewBox="0 0 36 36" stroke="#c8c8c8" strokeWidth="8" strokeLinecap="round">
                          <path d="M5 18h26M18 5v26" />
                        </svg>
                      </ZoomCell>
                      <ZoomCell $line>
                        <svg width="36" height="36" viewBox="0 0 36 36" stroke="#333" strokeWidth="9" strokeLinecap="round">
                          <path d="M5 18h26" />
                        </svg>
                      </ZoomCell>
                    </ZoomControl>
                    <Attribution>© OpenMapTiles | OpenStreetMap</Attribution>
                  </MapBox>
                  <MapNote>Location not accurate?</MapNote>
                  <Link>Update My IP Location</Link>
                </RightColumn>

                <Bell>
                  <svg width="76" height="76" viewBox="0 0 76 76">
                    <circle cx="38" cy="38" r="36.500" fill="none" stroke="#fff" strokeWidth="2.500" />
                    <path d="M38 13c3 0 4 2 4.500 4C50 19 54 25 54 33c0 10 2 14 7 19v2H15v-2c5-5 7-9 7-19 0-8 4-14 11.500-16 .5-2 1.500-4 4.500-4zM31 57h14c-1 5-4 7-7 7s-6-2-7-7z" fill="#fff" />
                  </svg>
                </Bell>
              </Hero>
            </Site>
            <ScrollBar>
              <svg width="28" height="15" viewBox="0 0 28 15" fill="#868686">
                <path d="M14 0l14 15H0z" />
              </svg>
              <Thumb />
              <svg width="28" height="15" viewBox="0 0 28 15" fill="#868686">
                <path d="M14 15L28 0H0z" />
              </svg>
            </ScrollBar>
          </Frame>
        </Viewport>

        <Taskbar>
          <StartButton>
            <svg width="50" height="50" viewBox="0 0 50 50" fill="#fff">
              <path d="M0 7l19-3.500V23H0zM22 3l28-3v23H22zM0 26h19v20L0 43zM22 26h28v24l-28-3.500z" />
            </svg>
          </StartButton>
          <SearchBox>
            <svg width="49" height="50" viewBox="0 0 49 50" fill="none" stroke="#222" strokeWidth="3">
              <circle cx="31" cy="17.500" r="16" />
              <path d="M20 29L1 49" />
            </svg>
            Type here to search
          </SearchBox>
          <TaskItem $w={153} $pr={8}>
            <svg width="49" height="48" viewBox="0 0 49 48" fill="none" stroke="#fff" strokeWidth="3">
              <path d="M1.500 0v8.500h31V0M1.500 48v-8.500h31V48M43 0v11M43 24v24" />
              <rect x="1.500" y="15" width="31" height="18" />
              <path d="M39 13h10v9H39z" fill="#fff" stroke="none" />
            </svg>
          </TaskItem>
          <TaskItem $w={144} $active $open>
            <EdgeLogo />
          </TaskItem>
          <TaskItem $w={149}>
            <svg width="65" height="55" viewBox="0 0 65 55">
              <path d="M0 0h27l5 4h33v48H0z" fill="#f8d66c" />
              <path d="M0 0h27l2 9H0z" fill="#e0a02c" />
              <path d="M12 30h42v25H42V42H24v13H12z" fill="#4a90d9" />
              <path d="M24 42h18v10H24z" fill="#f3c74f" />
            </svg>
          </TaskItem>
          <TaskItem $w={137}>
            <svg width="69" height="70" viewBox="0 0 69 70">
              <path d="M22 20V12c0-14 20-14 22 0v8M28 20v-6c2-12 20-12 22 0v6" fill="none" stroke="#fff" strokeWidth="2.500" />
              <path d="M0 18h69v47a5 5 0 01-5 5H5a5 5 0 01-5-5z" fill="#fff" />
              <path d="M18 27h15v15H18z" fill="#e8562a" />
              <path d="M36 27h15v15H36z" fill="#8abb35" />
              <path d="M18 45h15v15H18z" fill="#43a0ee" />
              <path d="M36 45h15v15H36z" fill="#f6b93c" />
            </svg>
          </TaskItem>
          <TaskItem $w={154}>
            <svg width="72" height="58" viewBox="0 0 72 58">
              <path d="M0 18L36 0l36 18v40H0z" fill="#fff" />
              <path d="M2 19h68L43 34l13 14z" fill="#232323" />
            </svg>
          </TaskItem>
          <TaskItem $w={117} $ml={10} $open>
            <svg width="76" height="76" viewBox="0 0 76 76">
              <defs>
                <linearGradient id="vpnA" x1="0" y1="0" x2="0" y2="1">
                  <stop offset="0" stopColor="#6a4cf0" />
                  <stop offset="1" stopColor="#6fe0c8" />
                </linearGradient>
                <linearGradient id="vpnB" x1="0" y1="0" x2="1" y2="0">
                  <stop offset="0" stopColor="#8057f0" />
                  <stop offset="1" stopColor="#ded9f6" />
                </linearGradient>
              </defs>
              <path d="M0 6c0-4 3-7 8-6l60 8c6 1 9 6 6 12L42 66c-3 3-8 2-9-1z" fill="url(#vpnB)" />
              <path d="M0 9l50 9c6 2 7 6 4 11L34 66z" fill="url(#vpnA)" />
              <path d="M52 52v-6c0-10 16-10 16 0v6" fill="none" stroke="#52b98e" strokeWidth="5" />
              <rect x="42" y="50" width="34" height="26" rx="4" fill="#52b98e" />
            </svg>
          </TaskItem>
          <Weather>
            <svg width="73" height="68" viewBox="0 0 73 68">
              <path d="M33 2q3.500-3 7 0l32 60q1 6-4 6H5q-6 0-4-6z" fill="#ecc840" />
              <g stroke="#2b2b20" strokeWidth="2" fill="none">
                <path d="M39 49V27c0-5 8-5 8 0v22a7 7 0 11-8 0z" />
                <path d="M25 35v18M16 44h18M18.500 37.500l13 13M31.500 37.500l-13 13" />
              </g>
              <circle cx="25" cy="44" r="5" fill="#2b2b20" />
            </svg>
            Heat...
          </Weather>
          <Tray>
            <svg width="36" height="21" viewBox="0 0 36 21" fill="none" stroke="#fff" strokeWidth="3.500">
              <path d="M1 20L18 2l17 18" />
            </svg>
            <svg width="36" height="50" viewBox="0 0 36 50" fill="none" stroke="#fff" strokeWidth="3">
              <rect x="2" y="13" width="22" height="24" rx="5" />
              <path d="M32 16c-7 4-7 14 0 18zM5 5c6-5 17-5 23 0M5 45c6 5 17 5 23 0" />
            </svg>
            <svg width="49" height="41" viewBox="0 0 49 41" fill="none" stroke="#fff" strokeWidth="3">
              <path d="M14 2h33v28H11M2 2h12v12H2zM8 14v27M29 30v9M18 39h22M5 7h6" />
            </svg>
            <svg width="50" height="42" viewBox="0 0 50 42" fill="none" stroke="#fff" strokeWidth="3">
              <path d="M2 14h7l9-11v36L9 28H2zM25 14c3 4 3 10 0 14M32 9c6 7 6 17 0 24M39 3c10 11 10 25 0 36" />
            </svg>
          </Tray>
          <Clock>
            <span>4:41 PM</span>
            <span>7/25/2025</span>
          </Clock>
          <Notice>
            <svg width="49" height="49" viewBox="0 0 49 49" fill="none" stroke="#fff" strokeWidth="3">
              <path d="M1.500 1.500h46v38H32L25 47l-7-7.500H1.500z" />
            </svg>
          </Notice>
        </Taskbar>
      </Screen>
    </>
  );
}
